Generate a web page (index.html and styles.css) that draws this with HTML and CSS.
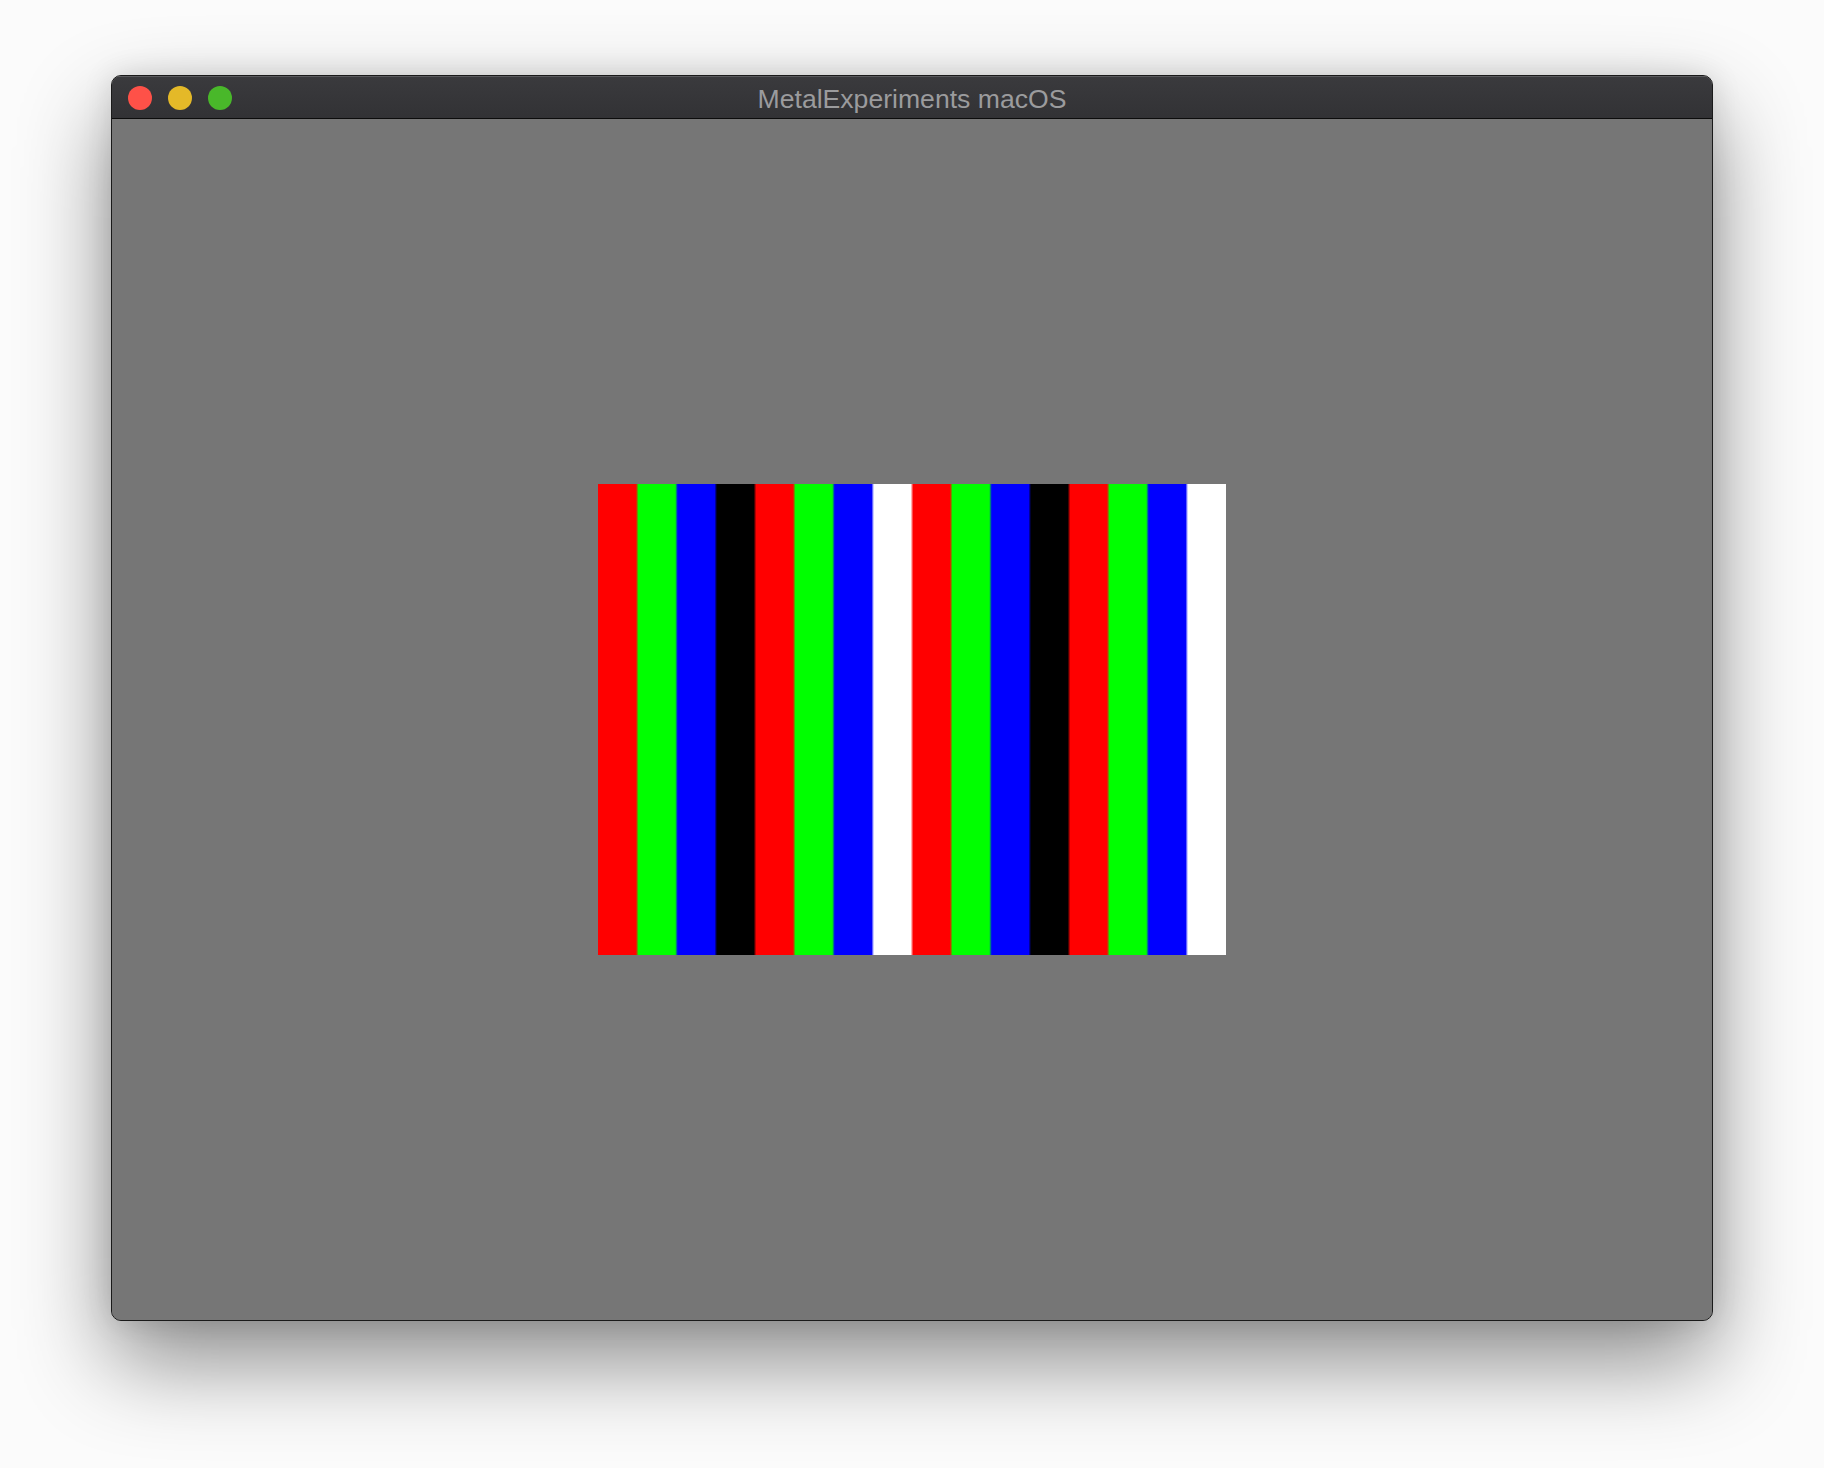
FILE: index.html
```html
<!DOCTYPE html>
<html>
<head>
<meta charset="utf-8">
<title>MetalExperiments macOS</title>
<link rel="stylesheet" href="styles.css">
</head>
<body>
<div class="window">
  <div class="titlebar">
    <div class="lights">
      <span class="light close"></span>
      <span class="light min"></span>
      <span class="light max"></span>
    </div>
    <div class="title">MetalExperiments macOS</div>
    <div class="spacer"></div>
  </div>
  <div class="content">
    <div class="stripes"></div>
  </div>
</div>
</body>
</html>
```

FILE: styles.css
```css
html, body {
  margin: 0;
  padding: 0;
}
body {
  background: #fbfbfb;
  width: 1824px;
  height: 1468px;
  overflow: hidden;
  font-family: "Liberation Sans", "Helvetica", Arial, sans-serif;
}
.window {
  box-sizing: border-box;
  width: 1602px;
  height: 1246px;
  margin: 75px auto 0;
  border: 1px solid #1a1a1a;
  border-radius: 10px;
  overflow: hidden;
  display: flex;
  flex-direction: column;
  box-shadow: 0 40px 90px rgba(0, 0, 0, 0.45), 0 0 30px rgba(0, 0, 0, 0.12);
  background: #767676;
}
.titlebar {
  box-sizing: border-box;
  height: 43px;
  flex: none;
  display: grid;
  grid-template-columns: 1fr auto 1fr;
  align-items: center;
  background: linear-gradient(#3a3a3d, #323235);
  border-top: 1px solid #5a5a5d;
  border-bottom: 1px solid #0c0c0c;
}
.lights {
  display: flex;
  gap: 16px;
  padding-left: 16px;
  align-items: center;
}
.light {
  width: 24px;
  height: 24px;
  border-radius: 50%;
  display: block;
}
.close { background: #fe5148; }
.min { background: #e4b928; }
.max { background: #49b82a; }
.title {
  color: #9b9b9d;
  font-size: 26.6px;
  padding-top: 3px;
  white-space: nowrap;
}
.content {
  flex: 1;
  display: flex;
  align-items: center;
  justify-content: center;
  background: #767676;
}
.stripes {
  width: 628px;
  height: 471px;
  background: linear-gradient(to right,
    #ff0000 0%, #ff0000 6.05%,
    #00ff00 6.45%, #00ff00 12.3%,
    #0000ff 12.7%, #0000ff 18.55%,
    #000000 18.95%, #000000 24.8%,
    #ff0000 25.2%, #ff0000 31.05%,
    #00ff00 31.45%, #00ff00 37.3%,
    #0000ff 37.7%, #0000ff 43.55%,
    #ffffff 43.95%, #ffffff 49.8%,
    #ff0000 50.2%, #ff0000 56.05%,
    #00ff00 56.45%, #00ff00 62.3%,
    #0000ff 62.7%, #0000ff 68.55%,
    #000000 68.95%, #000000 74.8%,
    #ff0000 75.2%, #ff0000 81.05%,
    #00ff00 81.45%, #00ff00 87.3%,
    #0000ff 87.7%, #0000ff 93.55%,
    #ffffff 93.95%, #ffffff 100%);
}
```
